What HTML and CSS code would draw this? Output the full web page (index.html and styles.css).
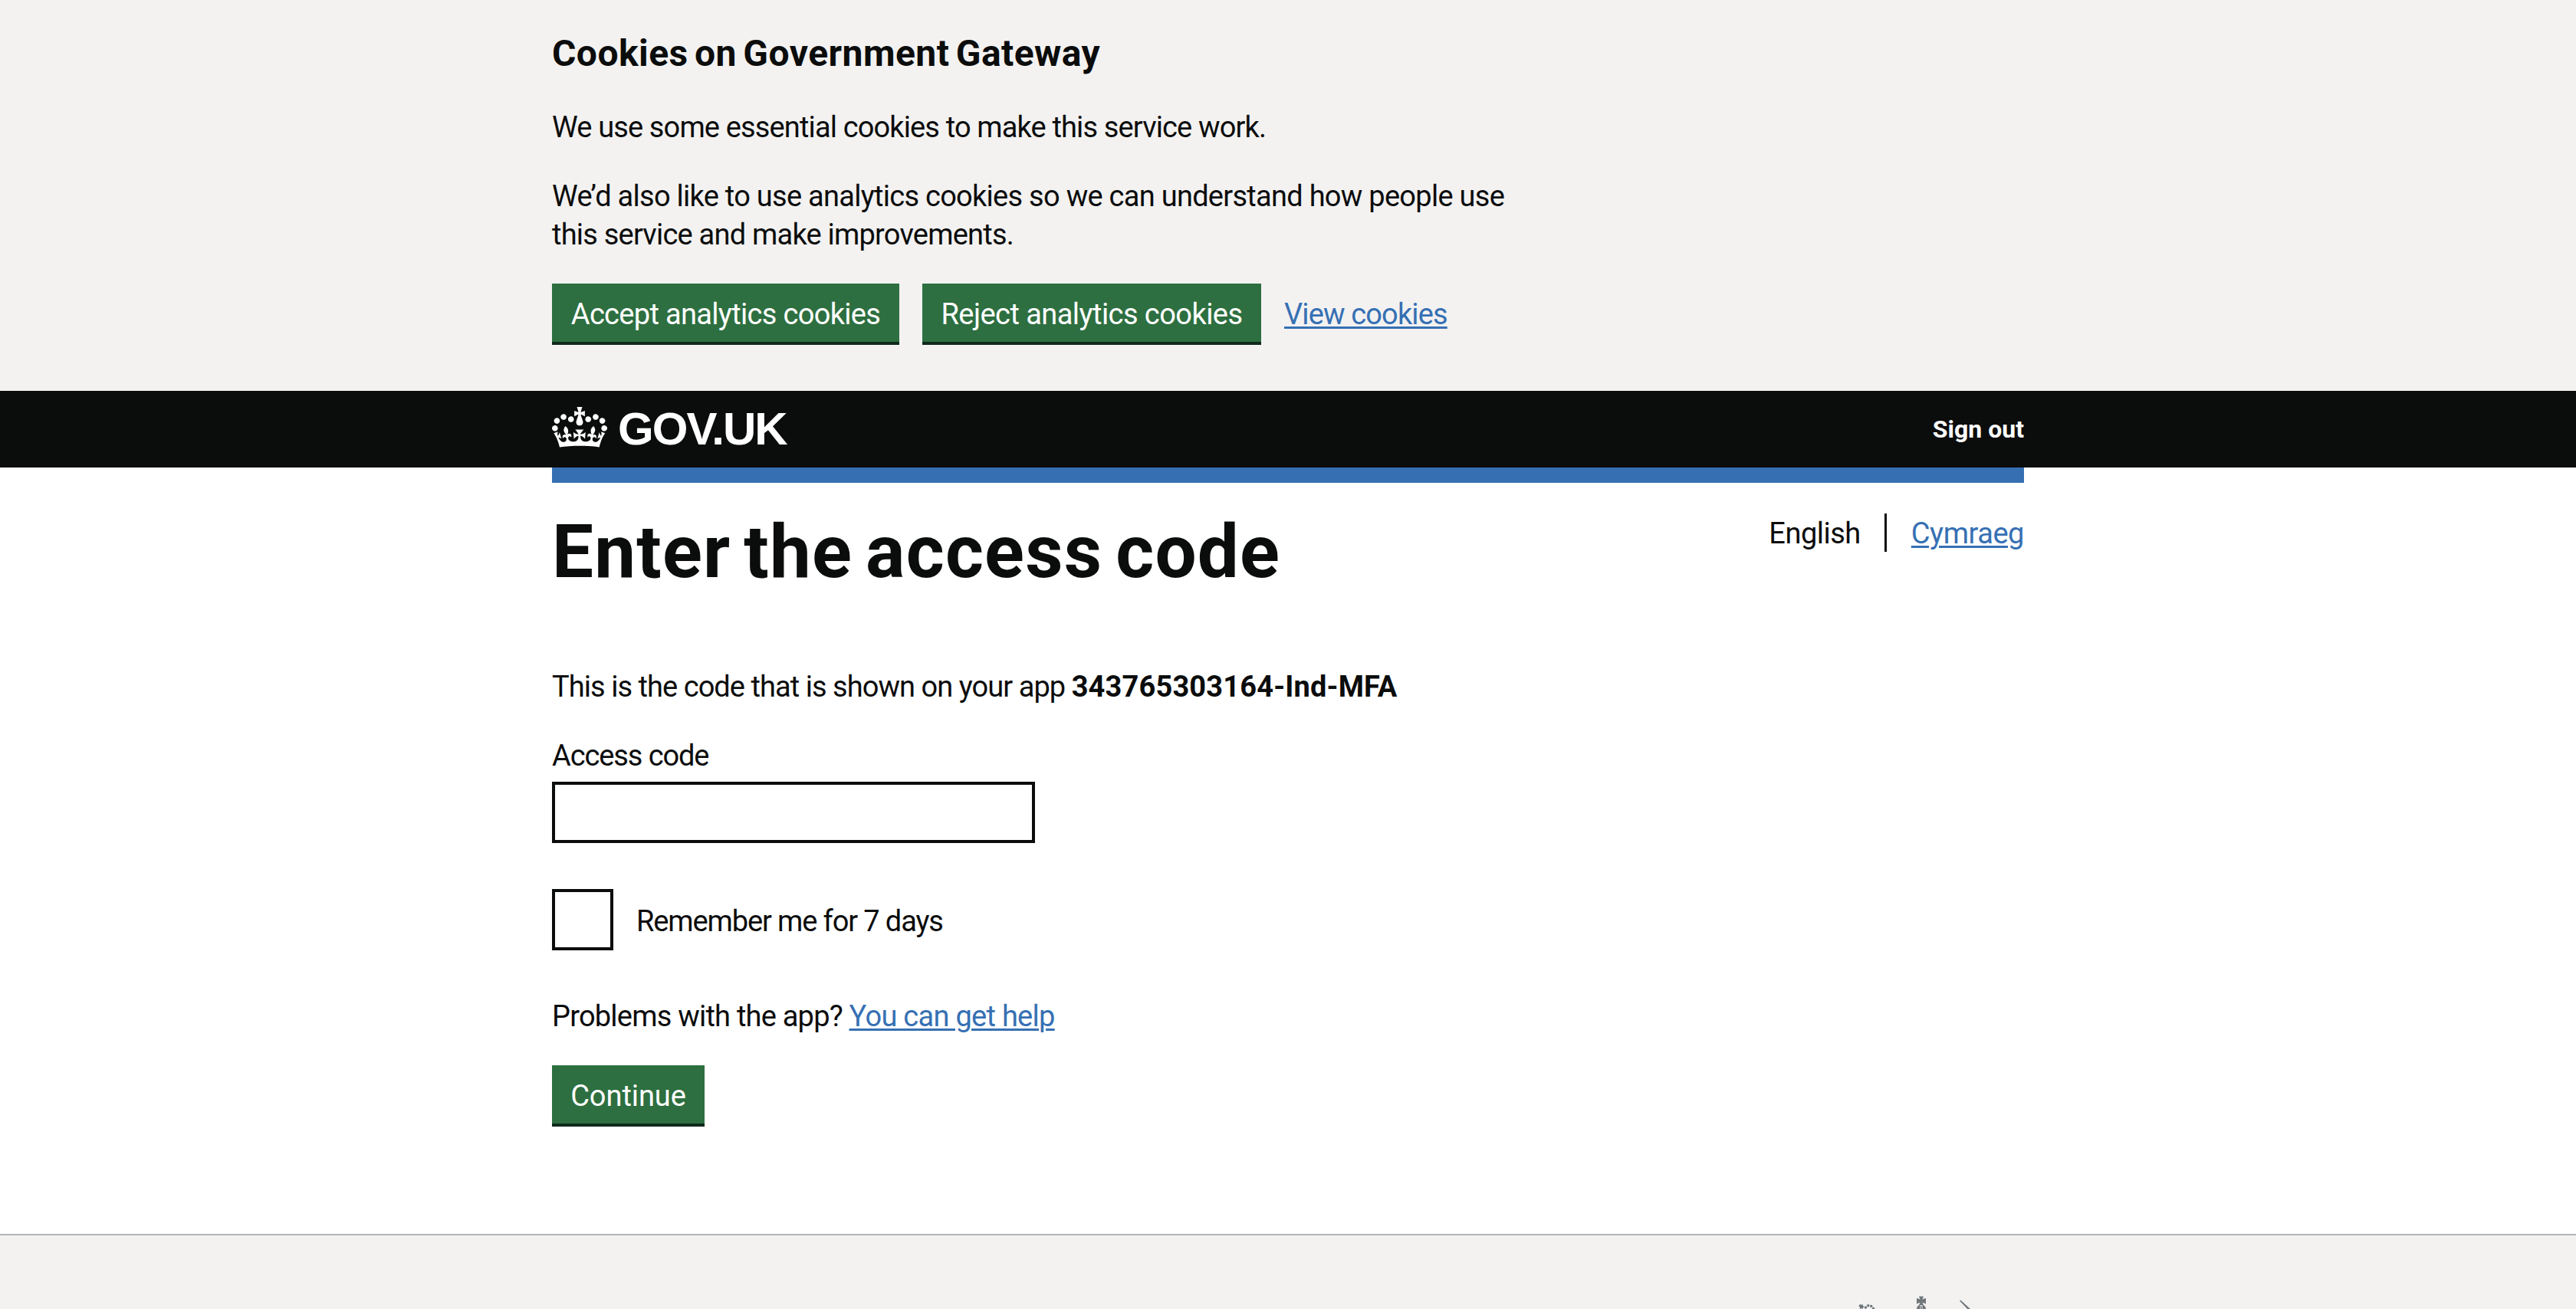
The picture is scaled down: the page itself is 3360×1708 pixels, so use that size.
FILE: index.html
```
<!DOCTYPE html>
<html lang="en">
<head>
<meta charset="utf-8">
<title>Enter the access code</title>
<link rel="stylesheet" href="styles.css">
</head>
<body>
<section class="cookie-banner" aria-label="Cookies on Government Gateway">
  <div class="container">
    <h2 class="cookie-title">Cookies on Government Gateway</h2>
    <p class="body-text cookie-intro">We use some essential cookies to make this service work.</p>
    <p class="body-text"><span class="cookie-line">We’d also like to use analytics cookies so we can understand how people use</span><br><span class="cookie-line-last">this service and make improvements.</span></p>
    <div class="button-group">
      <button class="button button-accept" type="button">Accept analytics cookies</button>
      <button class="button button-reject" type="button">Reject analytics cookies</button>
      <a class="link link-cookies" href="#">View cookies</a>
    </div>
  </div>
</section>
<header class="header">
  <div class="container header-row">
    <a class="logo" href="#">
      <svg class="crown" viewBox="0 0 132 97" aria-hidden="true"><path fill="currentColor" d="M25 30.2c3.5 1.5 7.7-.2 9.1-3.7 1.5-3.6-.2-7.8-3.9-9.2-3.6-1.4-7.6.3-9.1 3.9-1.4 3.5.3 7.5 3.9 9zM9 39.5c3.6 1.5 7.8-.2 9.2-3.7 1.5-3.6-.2-7.8-3.9-9.1-3.6-1.5-7.6.2-9.1 3.8-1.4 3.5.3 7.5 3.8 9zM4.4 57.2c3.5 1.5 7.7-.2 9.1-3.8 1.5-3.6-.2-7.7-3.9-9.1-3.5-1.5-7.6.3-9.1 3.8-1.4 3.5.3 7.6 3.9 9.1zm38.3-21.4c3.5 1.5 7.7-.2 9.1-3.8 1.5-3.6-.2-7.7-3.9-9.1-3.6-1.5-7.6.3-9.1 3.8-1.3 3.6.4 7.7 3.9 9.1zm64.4-5.6c-3.6 1.5-7.8-.2-9.1-3.7-1.5-3.6.2-7.8 3.8-9.2 3.6-1.4 7.7.3 9.2 3.9 1.3 3.5-.4 7.5-3.9 9zm15.9 9.3c-3.6 1.5-7.7-.2-9.1-3.7-1.5-3.6.2-7.8 3.7-9.1 3.6-1.5 7.7.2 9.2 3.8 1.5 3.5-.3 7.5-3.8 9zm4.7 17.7c-3.6 1.5-7.8-.2-9.2-3.8-1.5-3.6.2-7.7 3.9-9.1 3.6-1.5 7.7.3 9.2 3.8 1.3 3.5-.4 7.6-3.9 9.1zM89.3 35.8c-3.6 1.5-7.8-.2-9.2-3.8-1.4-3.6.2-7.7 3.9-9.1 3.6-1.5 7.7.3 9.2 3.8 1.4 3.6-.3 7.7-3.9 9.1zM69.7 17.7l8.9 4.7V9.3l-8.9 2.8c-.2-.3-.5-.6-.9-.9L72.4 0H59.6l3.5 11.2c-.3.3-.6.5-.9.9l-8.8-2.8v13.1l8.8-4.7c.3.3.6.7.9.9l-5 15.4v.1c-.2.8-.4 1.6-.4 2.4 0 4.1 3.1 7.5 7 8.1h.2c.3 0 .7.1 1 .1.4 0 .7 0 1-.1h.2c4-.6 7.1-4.1 7.1-8.1 0-.8-.1-1.7-.4-2.4V34l-5.1-15.4c.4-.2.7-.6 1-.9zM66 92.8c16.9 0 32.8 1.1 47.1 3.2 4-16.9 8.9-26.7 14-33.5l-9.6-3.4c1 4.9 1.1 7.2 0 10.2-1.5-1.4-3-4.3-4.2-8.7L108.6 76c2.8-2 5-3.2 7.5-3.3-4.4 9.4-10 11.9-13.6 11.2-4.3-.8-6.3-4.6-5.6-7.9 1-4.7 5.7-5.9 8-.5 4.3-8.7-3-11.4-7.6-8.8 7.1-7.2 7.9-13.5 2.1-21.1-8 6.1-8.1 12.3-4.5 20.8-4.7-5.4-12.1-2.5-9.5 6.2 3.4-5.2 7.9-2 7.2 3.1-.6 4.3-6.4 7.8-13.5 7.2-10.3-.9-10.9-8-11.2-13.8 2.5-.5 7.1 1.8 11 7.3L80.2 60c-4.1 4.4-8 5.3-12.3 5.4 1.4-4.4 8-11.6 8-11.6H55.5s6.4 7.2 7.9 11.6c-4.2-.1-8-1-12.3-5.4l1.4 16.4c3.9-5.5 8.5-7.7 10.9-7.3-.3 5.8-.9 12.8-11.1 13.8-7.2.6-12.9-2.9-13.5-7.2-.7-5 3.8-8.3 7.1-3.1 2.7-8.7-4.6-11.6-9.4-6.2 3.7-8.5 3.6-14.7-4.6-20.8-5.8 7.6-5 13.9 2.2 21.1-4.7-2.6-11.9.1-7.7 8.8 2.3-5.5 7.1-4.2 8.1.5.7 3.3-1.3 7.1-5.7 7.9-3.5.7-9-1.8-13.5-11.2 2.5.1 4.7 1.3 7.5 3.3l-4.7-15.4c-1.2 4.4-2.7 7.2-4.3 8.7-1.1-3-.9-5.3 0-10.2l-9.5 3.4c5 6.9 9.9 16.7 14 33.5 14.8-2.1 30.8-3.2 47.7-3.2z"/></svg>
      <span class="logo-text">GOV.UK</span>
    </a>
    <a class="sign-out" href="#">Sign out</a>
  </div>
</header>
<div class="container phase-bar"></div>
<main class="container main">
  <div class="title-row">
    <h1 class="page-title">Enter the access code</h1>
    <nav class="languages" aria-label="Language">
      <span class="language-current">English</span>
      <a class="link language-link" href="#">Cymraeg</a>
    </nav>
  </div>
  <p class="body-text app-line">This is the code that is shown on your app <strong class="app-name">343765303164-Ind-MFA</strong></p>
  <form class="form">
    <label class="body-text field-label" for="code">Access code</label>
    <input class="field" id="code" type="text">
    <div class="checkbox-row">
      <input class="checkbox" id="remember" type="checkbox">
      <label class="body-text checkbox-label" for="remember">Remember me for 7 days</label>
    </div>
    <p class="body-text help-line">Problems with the app? <a class="link help-link" href="#">You can get help</a></p>
    <button class="button button-continue" type="button">Continue</button>
  </form>
</main>
<footer class="footer">
  <div class="container footer-row">
    <svg class="crest" viewBox="0 0 250 204" aria-hidden="true">
      <g fill="currentColor">
        <path d="M113 1.500h6l-1.500 4 4.500-1.700v7.400l-4.500-1.700 1.500 3.500h-6l1.500-3.500-4.500 1.700V3.800l4.500 1.700z"/>
        <path d="M110 18c0-3 2-5 4.500-5.500V20H110zM122 18c0-3-2-5-4.500-5.500V20h4.500zM115.300 14h1.400v6h-1.400z"/>
        <path d="M35.500 12l3 .5 1-1 .5 2.500 2 1-2 1.200V18l-2-1-2.500 1 .5-2.500-1.500-1z"/>
        <circle cx="43.500" cy="16" r="1.700"/><circle cx="46.700" cy="13.500" r="1.700"/><circle cx="50.700" cy="14.200" r="1.700"/><circle cx="53.500" cy="17.200" r="1.700"/>
        <path d="M166 7.200l1.500-.7L180 18l-2 2z"/>
      </g>
    </svg>
  </div>
</footer>
</body>
</html>
```
FILE: styles.css
```
* {
  box-sizing: border-box;
}

body {
  margin: 0;
  height: 1708px;
  overflow: hidden;
  display: flex;
  flex-direction: column;
  background: #fff;
  color: #0b0c0c;
  font-family: Roboto, "Liberation Sans", sans-serif;
  font-size: 38px;
  line-height: 50px;
}

h1, h2, p {
  margin: 0;
}

.container {
  width: 1920px;
  margin: 0 auto;
}

.body-text {
  font-size: 38px;
  line-height: 50px;
}

.link {
  color: #3670b3;
  text-decoration: underline;
  text-decoration-thickness: 3px;
  text-underline-offset: 3px;
}

.cookie-banner {
  height: 510px;
  padding-top: 40px;
  flex: none;
  background: #f3f2f1;
}

.cookie-title {
  margin-bottom: 41px;
  font-size: 48px;
  line-height: 60px;
  letter-spacing: 0.45px;
  word-spacing: -4px;
}

.cookie-intro {
  margin-bottom: 40px;
  letter-spacing: -0.86px;
}

.cookie-line {
  letter-spacing: -0.725px;
}

.cookie-line-last {
  letter-spacing: -0.78px;
}

.button-group {
  display: flex;
  align-items: flex-start;
  gap: 30px;
  margin-top: 39px;
}

.button {
  display: block;
  height: 76px;
  padding: 4px 0 0;
  border: 0;
  border-radius: 0;
  background: #2d6f40;
  box-shadow: 0 4px 0 #10291c;
  color: #fff;
  font: inherit;
  line-height: 72px;
  text-align: center;
}

.button-accept {
  width: 453px;
  letter-spacing: -0.672px;
}

.button-reject {
  width: 442px;
  letter-spacing: -0.547px;
}

.button-continue {
  width: 199px;
  letter-spacing: -0.071px;
}

.link-cookies {
  padding-top: 15px;
  letter-spacing: -0.859px;
}

.header {
  flex: none;
  height: 100px;
  background: #0b0c0c;
  color: #fff;
}

.header-row {
  display: flex;
  justify-content: space-between;
  height: 100px;
}

.logo {
  display: flex;
  gap: 14px;
  color: #fff;
  text-decoration: none;
}

.crown {
  width: 72px;
  height: 53px;
  margin-top: 21px;
}

.logo-text {
  padding-top: 15px;
  font-family: "Liberation Sans", sans-serif;
  font-size: 60px;
  font-weight: 700;
  line-height: 70px;
  letter-spacing: -1.9px;
}

.sign-out {
  padding-top: 25px;
  color: #fff;
  font-size: 32px;
  font-weight: 700;
  text-decoration: none;
}

.phase-bar {
  flex: none;
  height: 20px;
  background: #3670b3;
}

.main {
  flex: none;
  height: 980px;
  padding-top: 40px;
}

.title-row {
  display: flex;
  justify-content: space-between;
  margin-bottom: 101px;
}

.page-title {
  font-size: 96px;
  line-height: 100px;
  letter-spacing: 1.2px;
  word-spacing: -8px;
}

.languages {
  display: flex;
  height: 50px;
  line-height: 52px;
}

.language-current {
  padding-right: 31px;
  border-right: 3px solid #0b0c0c;
  letter-spacing: -0.5px;
}

.language-link {
  margin-left: 32px;
  letter-spacing: -0.45px;
}

.app-line {
  margin-bottom: 40px;
  letter-spacing: -0.95px;
}

.app-name {
  letter-spacing: 0.154px;
}

.form {
  display: flex;
  flex-direction: column;
  align-items: flex-start;
}

.field-label {
  margin-bottom: 9px;
  letter-spacing: -1.1px;
}

.field {
  width: 630px;
  height: 80px;
  margin: 0 0 60px;
  padding: 10px;
  border: 4px solid #0b0c0c;
  border-radius: 0;
  background: #fff;
  font: inherit;
}

.checkbox-row {
  display: flex;
  align-items: center;
  gap: 30px;
  margin-bottom: 61px;
}

.checkbox {
  appearance: none;
  width: 80px;
  height: 80px;
  margin: 0;
  border: 4px solid #0b0c0c;
  background: #fff;
}

.checkbox-label {
  padding-top: 3px;
  letter-spacing: -1.12px;
}

.help-line {
  margin-bottom: 39px;
  letter-spacing: -0.78px;
}

.help-link {
  letter-spacing: -0.72px;
}

.footer {
  flex: 1;
  min-height: 0;
  overflow: hidden;
  padding-top: 78px;
  border-top: 2px solid #b1b4b6;
  background: #f3f2f1;
}

.footer-row {
  display: flex;
  justify-content: flex-end;
}

.crest {
  width: 250px;
  height: 204px;
  color: #6f777b;
}
```
